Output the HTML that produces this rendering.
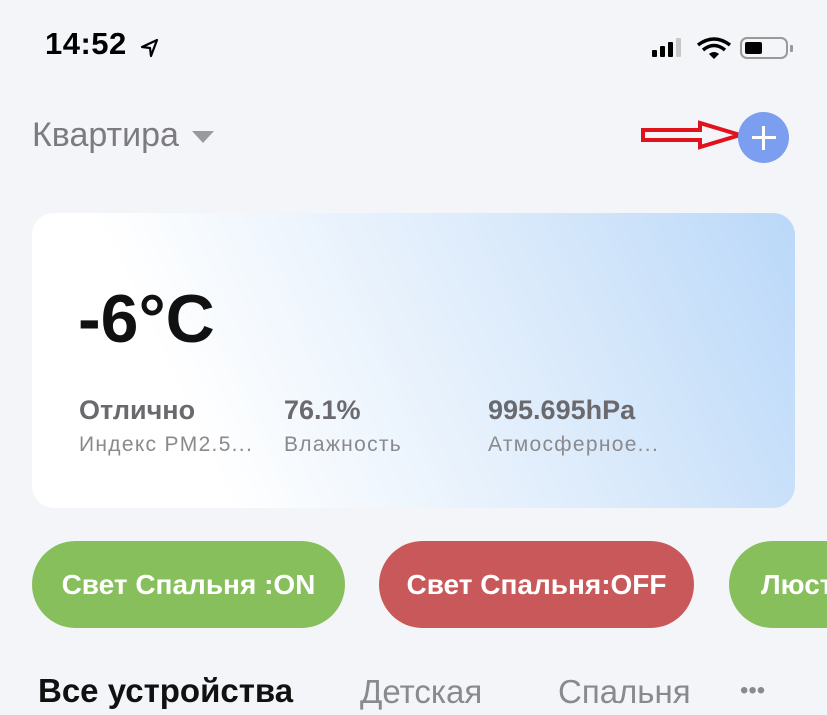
<!DOCTYPE html>
<html><head><meta charset="utf-8"><style>
body{margin:0;width:827px;height:715px;overflow:hidden;background:#f4f5f9;font-family:"Liberation Sans",sans-serif;position:relative}
.a{position:absolute;white-space:nowrap}
.card{position:absolute;left:32px;top:213px;width:763px;height:295px;border-radius:22px;background:linear-gradient(245deg,#bad8f9 0%,#dcebfb 35%,#ffffff 78%)}
.btn{position:absolute;top:541px;height:87px;border-radius:44px;color:#fff;font-size:26px;font-weight:bold;line-height:87px;text-align:center}
</style></head><body>
<div class="a" style="left:45px;top:26px;font-size:31px;font-weight:bold;color:#000;letter-spacing:0.5px">14:52</div>
<svg class="a" style="left:140px;top:38px" width="20" height="20" viewBox="0 0 20 20"><path d="M17 2 L2 9 L10 10 L11 18 Z" fill="none" stroke="#000" stroke-width="2.2" stroke-linejoin="round"/></svg>
<svg class="a" style="left:650px;top:35px" width="150" height="26" viewBox="0 0 150 26">
<rect x="2" y="15" width="5" height="7" rx="1" fill="#000"/><rect x="10" y="11" width="5" height="11" rx="1" fill="#000"/><rect x="18" y="7" width="5" height="15" rx="1" fill="#000"/><rect x="26" y="3" width="5" height="19" rx="1" fill="#c8c8c8"/>
<path d="M48 10 Q64 -2 80 10" stroke="#000" stroke-width="3.5" fill="none"/><path d="M53 15 Q64 6 75 15" stroke="#000" stroke-width="3.5" fill="none"/><path d="M59 19 L64 24 L69 19 Q64 15 59 19Z" fill="#000"/>
<rect x="91" y="3" width="46" height="20" rx="6" fill="none" stroke="#999" stroke-width="2"/><rect x="95" y="7" width="17" height="12" rx="2" fill="#000"/><rect x="140" y="10" width="3" height="7" rx="1" fill="#999"/></svg>
<div class="a" style="left:32px;top:116px;font-size:34px;color:#7c7c7f">Квартира</div>
<svg class="a" style="left:192px;top:131px" width="22" height="14"><path d="M0 0 H22 L11 12Z" fill="#9a9a9d"/></svg>
<svg class="a" style="left:640px;top:120px" width="110" height="32" viewBox="0 0 110 32"><path d="M3 10 H60 V3 L100 15 L60 27 V20 H3 Z" fill="none" stroke="#e0121b" stroke-width="4"/></svg>
<div class="a" style="left:738px;top:112px;width:51px;height:51px;border-radius:50%;background:#7c9ef0"></div>
<div class="a" style="left:752px;top:136px;width:24px;height:3px;background:#fff"></div>
<div class="a" style="left:762px;top:126px;width:3px;height:24px;background:#fff"></div>
<div class="card"></div>
<div class="a" style="left:78px;top:280px;font-size:68px;font-weight:bold;color:#111">-6°C</div>
<div class="a" style="left:79px;top:395px;font-size:27px;font-weight:bold;color:#6a6a6e">Отлично</div>
<div class="a" style="left:79px;top:433px;font-size:21px;color:#8a8a8e;letter-spacing:1.3px">Индекс PM2.5...</div>
<div class="a" style="left:284px;top:395px;font-size:27px;font-weight:bold;color:#6a6a6e">76.1%</div>
<div class="a" style="left:284px;top:433px;font-size:21px;color:#8a8a8e;letter-spacing:1.3px">Влажность</div>
<div class="a" style="left:488px;top:395px;font-size:27px;font-weight:bold;color:#6a6a6e">995.695hPa</div>
<div class="a" style="left:488px;top:433px;font-size:21px;color:#8a8a8e;letter-spacing:1.3px">Атмосферное...</div>
<div class="btn" style="left:32px;width:313px;background:#86bf5c;font-size:28px">Свет Спальня :ON</div>
<div class="btn" style="left:379px;width:315px;background:#c9585b;font-size:28px">Свет Спальня:OFF</div>
<div class="btn" style="left:729px;width:200px;background:#86bf5c;text-align:left;padding-left:32px;box-sizing:border-box;font-size:28px">Люстра</div>
<div class="a" style="left:38px;top:672px;font-size:33px;font-weight:bold;color:#111">Все устройства</div>
<div class="a" style="left:360px;top:673px;font-size:33px;color:#8a8a8e">Детская</div>
<div class="a" style="left:558px;top:673px;font-size:33px;color:#8a8a8e">Спальня</div>
<div class="a" style="left:740px;top:677px;font-size:24px;color:#8a8a8e;letter-spacing:0px">•••</div>
</body></html>
